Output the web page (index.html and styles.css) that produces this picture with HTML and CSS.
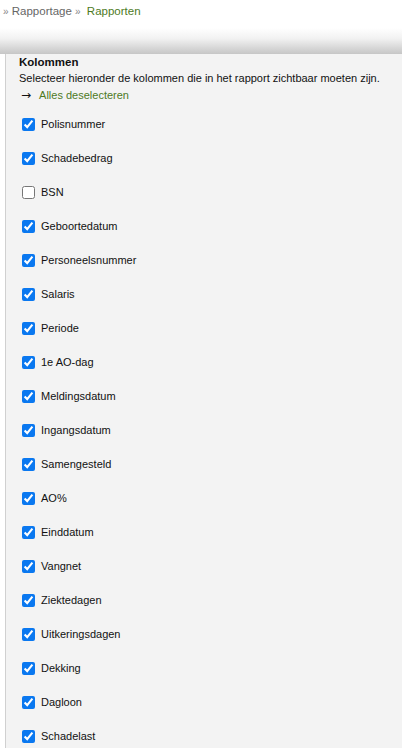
FILE: index.html
```html
<!DOCTYPE html>
<html lang="nl">
<head>
<meta charset="utf-8">
<link rel="stylesheet" href="styles.css">
</head>
<body>
<div class="crumbs"><span class="sep">»</span> <a class="crumb">Rapportage</a> <span class="sep">»</span> <a class="crumb current">Rapporten</a></div>
<div class="bar"></div>
<div class="panel">
  <h3 class="title">Kolommen</h3>
  <p class="desc">Selecteer hieronder de kolommen die in het rapport zichtbaar moeten zijn.</p>
  <div class="toggle"><span class="arrow">→</span><a class="link">Alles deselecteren</a></div>
  <ul class="cols">
    <li><label><input type="checkbox" checked> Polisnummer</label></li>
    <li><label><input type="checkbox" checked> Schadebedrag</label></li>
    <li><label><input type="checkbox"> BSN</label></li>
    <li><label><input type="checkbox" checked> Geboortedatum</label></li>
    <li><label><input type="checkbox" checked> Personeelsnummer</label></li>
    <li><label><input type="checkbox" checked> Salaris</label></li>
    <li><label><input type="checkbox" checked> Periode</label></li>
    <li><label><input type="checkbox" checked> 1e AO-dag</label></li>
    <li><label><input type="checkbox" checked> Meldingsdatum</label></li>
    <li><label><input type="checkbox" checked> Ingangsdatum</label></li>
    <li><label><input type="checkbox" checked> Samengesteld</label></li>
    <li><label><input type="checkbox" checked> AO%</label></li>
    <li><label><input type="checkbox" checked> Einddatum</label></li>
    <li><label><input type="checkbox" checked> Vangnet</label></li>
    <li><label><input type="checkbox" checked> Ziektedagen</label></li>
    <li><label><input type="checkbox" checked> Uitkeringsdagen</label></li>
    <li><label><input type="checkbox" checked> Dekking</label></li>
    <li><label><input type="checkbox" checked> Dagloon</label></li>
    <li><label><input type="checkbox" checked> Schadelast</label></li>
  </ul>
</div>
</body>
</html>
```
FILE: styles.css
```css
html, body { margin: 0; padding: 0; background: #fff; }
body {
  font-family: "Liberation Sans", Arial, sans-serif;
  font-size: 11px;
  color: #111;
  overflow: hidden;
  height: 748px;
}
.crumbs {
  padding: 5px 0 0 3px;
  height: 24px;
  box-sizing: border-box;
  color: #777;
  font-size: 11.5px;
}
.crumbs .sep { color: #888; font-size: 10px; }
.crumb { color: #666; }
.crumb.current { color: #4d7a1e; margin-left: 3px; }
.bar {
  height: 26px;
  margin-top: 4px;
  background: linear-gradient(#ffffff, #f2f2f2 40%, #c6c6c6);
}
.panel {
  margin-left: 5px;
  border-left: 1px solid #d0d0d0;
  background: #f3f3f3;
  padding: 1px 0 0 13px;
  min-height: 700px;
}
.title { margin: 0; font-size: 11.5px; font-weight: bold; line-height: 14px; }
.desc { margin: 2px 0 0 0; line-height: 14px; white-space: nowrap; }
.toggle { margin-top: 3px; line-height: 14px; padding-left: 2px; }
.arrow { color: #111; margin-right: 8px; font-family: "DejaVu Sans", sans-serif; font-size: 12px; }
.link { color: #4d7a1e; }
.cols { list-style: none; margin: 15px 0 0 0; padding: 0 0 0 3px; }
.cols li { height: 34px; }
.cols label { display: flex; align-items: center; gap: 6px; height: 14px; }
.cols input { margin: 0; width: 13px; height: 13px; accent-color: #0a78f0; }
```
